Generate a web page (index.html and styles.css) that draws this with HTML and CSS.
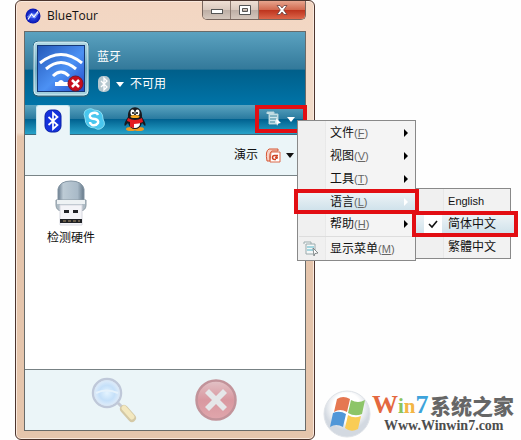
FILE: index.html
```html
<!DOCTYPE html>
<html lang="zh-CN">
<head>
<meta charset="utf-8">
<title>BlueTour</title>
<link rel="stylesheet" href="styles.css">
</head>
<body>
<main class="desktop">
  <section class="window">
    <header class="titlebar">
      <svg class="app-icon" viewBox="0 0 16 16"><defs><radialGradient id="app"><stop offset="0" stop-color="#3b62ff"/><stop offset="1" stop-color="#0712ae"/></radialGradient></defs><circle cx="8" cy="8" r="7.5" fill="url(#app)"/><path d="M3 11.500 6.500 6 9 9l4-5.500" fill="none" stroke="#fff" stroke-width="1.300"/><path d="M2.500 9 6 5.500l3 1L13.500 5l-3.500 5-3-1z" fill="none" stroke="#a9c0ff" stroke-width=".7"/></svg>
      <h1>BlueTour</h1>
      <div class="controls">
        <button aria-label="最小化"><svg viewBox="0 0 14 12"><rect x="1.500" y="5.500" width="11" height="4" fill="#fff" stroke="#555"/></svg></button>
        <button aria-label="最大化"><svg viewBox="0 0 14 12"><path d="M1.500 1.500h11v9h-11zM4.500 4.500v3h5v-3z" fill="#fff" fill-rule="evenodd" stroke="#555"/></svg></button>
        <button class="close" aria-label="关闭"><svg viewBox="0 0 14 12"><path d="M2 1.500h3l2 2.500 2-2.500h3L8.700 6l3.300 4.500H9L7 8l-2 2.500H2L5.300 6z" fill="#fff" stroke="#664040" stroke-width=".8"/></svg></button>
      </div>
    </header>
    <div class="client">
      <div class="status">
        <svg class="wifi" viewBox="0 0 58 58"><defs><linearGradient id="wf" x1="0" y1="0" x2="1" y2="1"><stop offset="0" stop-color="#2458b8"/><stop offset=".55" stop-color="#4c91f4"/><stop offset="1" stop-color="#2149c8"/></linearGradient><linearGradient id="frame" x1="0" y1="0" x2="0" y2="1"><stop offset="0" stop-color="#b4d9e4"/><stop offset=".5" stop-color="#6fadc4"/><stop offset="1" stop-color="#a6d2df"/></linearGradient></defs><rect x="1" y="1" width="56" height="56" rx="5" fill="#28637d"/><rect x="2" y="2" width="54" height="53" rx="4" fill="url(#frame)" stroke="#d9f1f7"/><rect x="5.500" y="5.500" width="47" height="46" fill="url(#wf)" stroke="#163876"/><g fill="none" stroke="#fff" stroke-width="3"><path d="M8 23q21-17 42 0M14 29q15-13 30 0M21 36q8-8 16 0"/></g><path d="M23 46v-4h3q3-4 6 0h4v4z" fill="#fff"/><circle cx="43.500" cy="43.500" r="7.500" fill="#c70d1d" stroke="#7d1626"/><path d="m40 40 7 7m0-7-7 7" stroke="#fff" stroke-width="2.500"/></svg>
        <div class="status-text">
          <p>蓝牙</p>
          <button class="availability"><svg class="bt-small" viewBox="0 0 12 16"><rect width="12" height="16" rx="5" fill="#b4c7cf"/><path d="m3 5 6 6-3 3V2l3 3-6 6" fill="none" stroke="#fff" stroke-width="1.300"/></svg><svg class="arrow" viewBox="0 0 8 5"><path d="M0 0h8L4 5z" fill="#fff"/></svg><span>不可用</span></button>
        </div>
      </div>
      <div class="tabs">
        <button class="tab active" aria-label="蓝牙"><svg viewBox="0 0 24 24"><rect x="4" y="1" width="16" height="22" rx="6" fill="#1432dc" stroke="#0920a6"/><path d="m7.500 8 9 8-4.500 4V4l4.500 4-9 8" fill="none" stroke="#fff" stroke-width="1.700"/></svg></button>
        <button class="tab" aria-label="Skype"><svg viewBox="0 0 24 24"><path d="M3 4Q8 0 12 3q9 0 9 9 4 7-3 10-3 1-5-1Q3 21 3 11 1 7 3 4z" fill="#49c6ee" stroke="#87def4"/><path d="M16 8q-1-3-5-2-4 1-3 4 1 2 5 2 4 1 3 4-2 3-6 2-2-1-2-3" fill="none" stroke="#fff" stroke-width="2.500"/></svg></button>
        <button class="tab" aria-label="QQ"><svg viewBox="0 0 24 24"><ellipse cx="8" cy="22" rx="5" ry="2" fill="#ee9b22"/><ellipse cx="16" cy="22" rx="5" ry="2" fill="#ee9b22"/><path d="M5 10C4-3 20-3 19 10q5 8 3 9l-3-3q-2 6-7 6t-7-6l-3 3q-2-2 3-9z" fill="#171a20"/><ellipse cx="12" cy="17" rx="5" ry="4" fill="#fff"/><ellipse cx="9.500" cy="5.500" rx="2" ry="3" fill="#fff"/><ellipse cx="14.500" cy="5.500" rx="2" ry="3" fill="#fff"/><circle cx="10" cy="6" r="1"/><circle cx="14" cy="6" r="1"/><ellipse cx="12" cy="9.500" rx="4.500" ry="1.500" fill="#f7a720"/><path d="M5 11q7 4 14 0l1 4q-4 2-9 2v4l-4-1v-5l-3-1z" fill="#e51c20"/></svg></button>
        <div class="menu-anchor">
          <button class="menu-button" aria-label="菜单"><svg class="list-icon" viewBox="0 0 16 16"><path d="M1 3V1h7v2m-5 0h9v10H3z" fill="#cfe8ee" stroke="#b4d1d8"/><path d="M4 5h7M4 8h7M4 11h5" stroke="#36829b"/><path d="m10 7 5 5-3 .5L11 15z" fill="#fff"/></svg><svg class="arrow" viewBox="0 0 8 5"><path d="M0 0h8L4 5z" fill="#fff"/></svg></button>
          <ul class="menu">
            <li><button>文件<small>(<u>F</u>)</small><i></i></button></li>
            <li><button>视图<small>(<u>V</u>)</small><i></i></button></li>
            <li><button>工具<small>(<u>T</u>)</small><i></i></button></li>
            <li class="language"><button class="selected">语言<small>(<u>L</u>)</small><i></i></button>
              <ul class="menu submenu">
                <li><button class="latin">English</button></li>
                <li class="chosen"><button class="selected"><svg class="check" viewBox="0 0 18 18"><path d="m5 9 3 3 5-6" fill="none" stroke="#111" stroke-width="1.600"/></svg>简体中文</button></li>
                <li><button>繁體中文</button></li>
              </ul>
            </li>
            <li><button>帮助<small>(<u>H</u>)</small><i></i></button></li>
            <li class="show-menu"><button><svg class="list-icon" viewBox="0 0 16 16"><path d="M1 3V1h7v2m-5 0h9v10H3z" fill="#f5f8f8" stroke="#9baaac"/><path d="M4 6h7M4 9h7" stroke="#50b2c5"/><path d="m10 7 5 5-3 .5L11 15z" fill="#fff" stroke="#6b7274" stroke-width=".8"/></svg><span>显示菜单<small>(<u>M</u>)</small></span></button></li>
          </ul>
        </div>
      </div>
      <div class="toolbar"><span>演示</span><button class="presentation" aria-label="演示"><svg class="ppt" viewBox="0 0 16 16"><path d="M2 14q-2-10 2-12h9v2H7Q4 5 5 14z" fill="#f7d1c5" stroke="#d65635"/><path d="M6 5h9v10H5z" fill="#fff" stroke="#dc6848"/><path d="M13 8.500H9.500q-2 0-2 2t2 2H11" fill="none" stroke="#cf4526" stroke-width="1.500"/><circle cx="11.500" cy="10.500" r="1.500" fill="#cf4526"/></svg><svg class="arrow" viewBox="0 0 8 5"><path d="M0 0h8L4 5z" fill="#111"/></svg></button></div>
      <div class="devices">
        <button class="device"><svg viewBox="0 0 32 46"><defs><linearGradient id="usb"><stop stop-color="#687b8d"/><stop offset=".2" stop-color="#bdcbd5"/><stop offset=".75" stop-color="#a9bac8"/><stop offset="1" stop-color="#657888"/></linearGradient></defs><path d="M3 22V9Q5 1 16 1t13 8v13z" fill="url(#usb)" stroke="#8294a2"/><path d="M1 20h30v5q0 5-5 6H6q-5-1-5-6z" fill="#aebbc4" stroke="#8d9ba5"/><path d="M2 20h28v4H2z" fill="#eef2f4"/><path d="M5 25h22v20H5z" fill="#f4f4f8" stroke="#d7d8e0"/><path d="M9 30h5v3H9zm9 0h5v3h-5zM5 39h22v4H5z" fill="#202226"/><path d="M8 41h3m2 0h3m2 0h3m2 0h2" stroke="#ae9469"/></svg><span>检测硬件</span></button>
      </div>
      <footer class="actions">
        <button aria-label="搜索"><svg viewBox="0 0 48 48"><defs><radialGradient id="glass"><stop offset="0" stop-color="#e4f4ff"/><stop offset=".55" stop-color="#c5e0f9"/><stop offset="1" stop-color="#e5effa"/></radialGradient></defs><path d="m28 27 7 7" stroke="#c5c9d3" stroke-width="3"/><path d="m34 33 8 9" stroke="#d4c9a6" stroke-width="8" stroke-linecap="round"/><path d="m34 32 8 9" stroke="#f3e8bf" stroke-width="5" stroke-linecap="round"/><circle cx="17" cy="17" r="14" fill="url(#glass)" stroke="#bfc8d9" stroke-width="2.500"/><circle cx="17" cy="17" r="12.500" fill="none" stroke="#d9e7f5"/><path d="M6 17q10-5 22 0" fill="none" stroke="#e6f2fb" stroke-width="2"/></svg></button>
        <button aria-label="取消"><svg viewBox="0 0 48 48"><defs><linearGradient id="stop" x1="0" y1="0" x2="0" y2="1"><stop stop-color="#e2c3c7"/><stop offset=".5" stop-color="#d998a0"/><stop offset="1" stop-color="#e0a6ac"/></linearGradient></defs><circle cx="24" cy="24" r="19.500" fill="url(#stop)" stroke="#c2939a" stroke-width="2.500"/><path d="m13 17 4-4 7 7 7-7 4 4-7 7 7 7-4 4-7-7-7 7-4-4 7-7z" fill="#e5e7e9"/></svg></button>
      </footer>
    </div>
  </section>
  <aside class="brand">
    <svg class="flag" viewBox="0 0 48 48"><defs><radialGradient id="orb" cy=".35"><stop offset=".6" stop-color="#fff"/><stop offset="1" stop-color="#d3d9e1"/></radialGradient></defs><circle cx="24" cy="24" r="23" fill="url(#orb)" stroke="#dfe3e8"/><path d="M14 9q6-4 13 0l-3 13q-7-4-13 0z" fill="#e57751"/><path d="M28 10q7 4 14 0l-3 14q-7 3-14-1z" fill="#8dc568"/><path d="M10 23q7-3 13 1l-3 13q-7-4-13 0z" fill="#5197d8"/><path d="M25 25q6 4 13 1l-3 13q-7 4-13-1z" fill="#f9cc55"/></svg>
    <div class="brand-text"><strong><span class="win"><span class="w">W</span><span class="i">i</span><span class="n">n</span><span class="seven">7</span></span><span class="name">系统之家</span></strong><b>Www.Winwin7.com</b></div>
  </aside>
</main>
</body>
</html>
```
FILE: styles.css
```css
* { box-sizing: border-box; }
body { margin: 0; background: #fefefe; font: 12px/16px "Liberation Sans", "Noto Sans CJK SC", sans-serif; color: #111; }
button { border: 0; padding: 0; margin: 0; background: none; color: inherit; font: inherit; }
svg { display: block; flex: none; }
h1, p, ul { margin: 0; padding: 0; }
li { list-style: none; }
.desktop { position: relative; min-height: 100vh; padding-left: 15px; display: flex; }
.window { display: flex; flex-direction: column; width: 59.3%; padding: 0 8px 8px; border: 1px solid #4c352e; border-radius: 6px; background: linear-gradient(#f3d6c2, #f0dccb 30%, #e5c5ac 31%); box-shadow: inset 0 0 0 1px #fae9dd; }
.titlebar { display: flex; align-items: center; height: 30px; gap: 6px; padding-left: 1px; }
.app-icon { width: 16px; height: 16px; }
h1 { font: 12px/18px "Open Sans", sans-serif; }
.controls { display: flex; align-self: flex-start; margin-left: auto; height: 19px; border: 1px solid #78665e; border-top: 0; border-radius: 0 0 5px 5px; overflow: hidden; }
.controls button { width: 28px; display: grid; place-items: center; border-right: 1px solid #8b7970; background: linear-gradient(#efdfd5, #dac9be 48%, #bdaea5 50%, #d5c7bd); }
.controls .close { width: 46px; border: 0; background: linear-gradient(#e7a58e, #d26a50 48%, #bd321c 50%, #dc664a); }
.controls svg { width: 14px; height: 12px; }
.client { flex: 1; display: flex; flex-direction: column; border: 1px solid #696b69; background: #fff; }
.status { height: 73px; display: flex; gap: 7px; padding: 8px 7px; background: linear-gradient(#5ba2c0, #33799a 51%, #005f8a 52%, #0074a8); color: #fff; }
.wifi { width: 58px; height: 58px; }
.status-text { padding-top: 9px; }
.availability { display: flex; align-items: center; gap: 6px; margin-top: 11px; margin-left: 1px; }
.bt-small { width: 12px; height: 16px; }
.arrow { width: 8px; height: 5px; }
.tabs { display: flex; height: 30px; padding-left: 11px; gap: 7px; border-bottom: 1px solid #3a6a7d; background: linear-gradient(#5ca4c0, #2a7ba0 47%, #00618f 49%, #28a2c9); }
.tab { width: 34px; height: 28px; display: grid; place-items: center; }
.tab svg { width: 24px; height: 24px; }
.tab.active { height: 30px; border: 1px solid #cae7ee; border-bottom: 0; border-radius: 3px 3px 0 0; background: #ebf5f8; }
.menu-anchor { position: relative; width: 52px; height: 28px; margin: 0 -2px 0 auto; border: 4px solid #e20e13; }
.menu-button { display: flex; align-items: center; gap: 5px; width: 100%; height: 100%; padding-left: 7px; }
.list-icon { width: 16px; height: 16px; }
.menu { position: absolute; z-index: 2; left: 38px; top: 11px; width: 119px; padding: 0 1px; border: 1px solid #898989; background: linear-gradient(90deg, #f0f0f0 27px, #ddd 27px, #f4f4f4 28px); }
.menu button { display: flex; align-items: center; width: 100%; height: 23px; padding-left: 31px; text-align: left; white-space: nowrap; }
.menu small { color: #666; font-size: 11px; }
.menu i { margin: 0 6px 0 auto; border: 4px solid transparent; border-left-color: #000; border-right: 0; }
.menu .selected { background: linear-gradient(#edf3f6, #d0e2eb); }
.menu .selected i { border-left-color: #fff; }
.menu .language { position: relative; margin: 0 -5px; height: 23px; }
.language > button { position: relative; z-index: 3; height: 25px; margin-top: -1px; padding: 0 1px 0 32px; border: 4px solid #e20e13; }
.menu .submenu { left: 121px; top: -1px; width: 96px; background: linear-gradient(90deg, #f0f0f0 27px, #ddd 27px, #f2f2f2 28px); }
.submenu .latin { font-size: 11px; }
.submenu .chosen { display: flex; align-items: center; height: 23px; margin: 0 -9px 0 -5px; }
.submenu .chosen button { flex: none; height: 26px; padding-left: 8px; border: 4px solid #e20e13; gap: 6px; }
.submenu .chosen .check { width: 18px; height: 18px; background: #fff; }
.show-menu { margin-top: 1px; border-top: 1px solid #ddd; }
.menu .show-menu button { padding-left: 4px; gap: 11px; }
.toolbar { display: flex; align-items: center; justify-content: flex-end; height: 41px; padding-right: 11px; gap: 7px; border-bottom: 1px solid #798487; background: #ebf5f8; }
.presentation { display: flex; align-items: center; gap: 5px; }
.ppt { width: 16px; height: 16px; }
.devices { flex: 1; padding: 4px 18px; }
.device { display: flex; flex-direction: column; align-items: center; gap: 4px; width: 56px; }
.device svg { width: 32px; height: 46px; }
.actions { display: flex; align-items: center; justify-content: center; gap: 54px; height: 61px; border-top: 1px solid #778184; background: #ebf5f8; }
.actions svg { width: 48px; height: 48px; }
.brand { position: absolute; right: 7px; bottom: 2px; display: flex; align-items: center; gap: 1px; }
.flag { width: 48px; height: 48px; }
.brand-text { width: 142px; }
.brand strong { display: flex; align-items: center; justify-content: space-between; height: 24px; font: bold 26px/24px "Liberation Serif", serif; }
.win { display: flex; align-items: baseline; }
.w { color: #e4683f; }
.i { color: #8bc45e; font-size: 21px; }
.n { color: #f3b544; font-size: 21px; }
.seven { color: #3da3db; }
.name { color: #666; font: 900 21px/24px "Noto Sans CJK SC", sans-serif; }
.brand b { display: block; padding-left: 12px; color: #4d4d4d; font: bold 14px/18px "Liberation Serif", serif; }
```
